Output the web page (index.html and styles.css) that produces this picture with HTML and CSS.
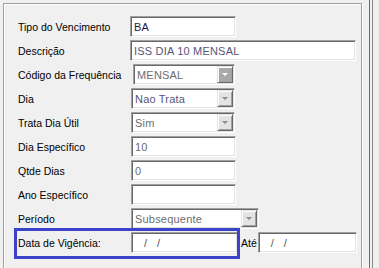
FILE: index.html
```html
<!DOCTYPE html>
<html lang="pt-BR">
<head>
    <meta charset="UTF-8">
    <title>Tipo do Vencimento</title>
    <link rel="stylesheet" href="styles.css">
</head>
<body>
    <div class="window">
        <div class="group">
            <div class="rows">
                <label>Tipo do Vencimento</label>
                <div class="field w-ba"><span class="val dark">BA</span></div>

                <label>Descrição</label>
                <div class="field w-desc"><span class="val blue">ISS DIA 10 MENSAL</span></div>

                <label>Código da Frequência</label>
                <div class="combo w-freq">
                    <span class="val">MENSAL</span>
                    <span class="drop off"></span>
                </div>

                <label>Dia</label>
                <div class="combo w-dia">
                    <span class="val blue">Nao Trata</span>
                    <span class="drop"></span>
                </div>

                <label>Trata Dia Útil</label>
                <div class="combo w-dia">
                    <span class="val">Sim</span>
                    <span class="drop"></span>
                </div>

                <label>Dia Específico</label>
                <div class="field w-num"><span class="val">10</span></div>

                <label>Qtde Dias</label>
                <div class="field w-num"><span class="val">0</span></div>

                <label>Ano Específico</label>
                <div class="field w-num"><span class="val"></span></div>

                <label>Período</label>
                <div class="combo w-per">
                    <span class="val">Subsequente</span>
                    <span class="drop"></span>
                </div>

                <label>Data de Vigência:</label>
                <div class="range">
                    <div class="field w-date"><span class="val date">/ &nbsp; /</span></div>
                    <span class="ate">Até</span>
                    <div class="field w-date2"><span class="val date">/ &nbsp; /</span></div>
                </div>
            </div>

            <!-- highlight round the validity date -->
            <div class="highlight"></div>
        </div>
        <div class="edge"></div>
    </div>
</body>
</html>
```

FILE: styles.css
```css
/* Windows form look */
body {
    margin: 0;
    background-color: #f0f0f0;
    font-family: 'Liberation Sans', Arial, sans-serif;
    font-size: 10.5px;
    color: #000;
}

.window {
    display: flex;
    height: 268px;
    overflow: hidden;
}

.group {
    position: relative;
    margin: 3px 0 0 3px;
    width: 359px;
    height: 300px;
    border: 1px solid #a0a0a0;
    box-shadow: inset 1px 1px 0 #fff, 1px 1px 0 #fff;
    padding: 12px 0 0 14px;
    box-sizing: border-box;
}

.edge {
    margin-left: 7px;
    width: 2px;
    border-left: 1px solid #6d6d6d;
    border-right: 1px solid #8a8a8a;
}

.rows {
    display: grid;
    grid-template-columns: 112px auto;
    grid-auto-rows: 21px;
    row-gap: 3px;
    align-items: center;
}

.rows label {
    white-space: nowrap;
}

.field,
.combo {
    display: flex;
    align-items: center;
    height: 21px;
    box-sizing: border-box;
    background-color: #fff;
    border-top: 1px solid #a0a0a0;
    border-left: 1px solid #a0a0a0;
    border-right: 1px solid #fff;
    border-bottom: 1px solid #fff;
    box-shadow: inset 1px 1px 0 #696969, inset -1px -1px 0 #e3e3e3;
    font-size: 11px;
}

.val {
    flex: 1;
    padding-left: 3px;
    color: #6d6d6d;
    white-space: nowrap;
    letter-spacing: 0.2px;
}

.val.dark { color: #1e1e3c; }
.val.blue { color: #55557a; }
.val.date { padding-left: 12px; color: #555; }

.combo {
    padding-right: 1px;
}

.drop {
    position: relative;
    width: 16px;
    height: 17px;
    box-sizing: border-box;
    background-color: #e3e3e3;
    border-top: 1px solid #e3e3e3;
    border-left: 1px solid #e3e3e3;
    border-right: 1px solid #696969;
    border-bottom: 1px solid #696969;
    box-shadow: inset 1px 1px 0 #fff, inset -1px -1px 0 #a0a0a0;
}

.drop::after {
    content: "";
    position: absolute;
    left: 4px;
    top: 6px;
    border-left: 3px solid transparent;
    border-right: 3px solid transparent;
    border-top: 3px solid #8a8a8a;
}

.drop.off {
    background-color: #a8a8a8;
}

.drop.off::after {
    border-top-color: #fff;
}

.w-ba { width: 106px; margin-left: 0; }
.w-desc { width: 226px; margin-left: 0; }
.w-freq { width: 102px; margin-left: 3px; }
.w-dia { width: 104px; margin-left: 1px; }
.w-num { width: 105px; margin-left: 1px; }
.w-per { width: 128px; margin-left: 1px; }
.w-date { width: 107px; margin-left: 1px; }
.w-date2 { width: 99px; }

.range {
    display: flex;
    align-items: center;
}

.ate {
    padding: 0 1px 0 3px;
}

.highlight {
    position: absolute;
    left: 10px;
    top: 224px;
    width: 226px;
    height: 31px;
    box-sizing: border-box;
    border: 3px solid #3b44c8;
}
```
